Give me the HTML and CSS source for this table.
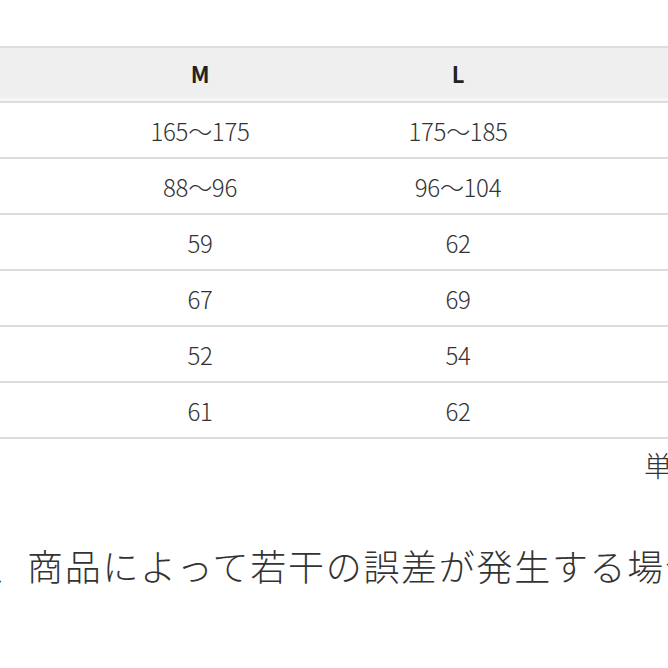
FILE: index.html
```html
<!DOCTYPE html>
<html lang="ja">
<head>
<meta charset="utf-8">
<title>サイズ表</title>
<link rel="stylesheet" href="styles.css">
</head>
<body>
<main class="sheet">
  <div class="size-table">
    <div class="row head">
      <div class="cell">サイズ</div>
      <div class="cell">M</div>
      <div class="cell">L</div>
      <div class="cell">XL</div>
    </div>
    <div class="row">
      <div class="cell">身長</div>
      <div class="cell">165〜175</div>
      <div class="cell">175〜185</div>
      <div class="cell">185〜195</div>
    </div>
    <div class="row">
      <div class="cell">胸囲</div>
      <div class="cell">88〜96</div>
      <div class="cell">96〜104</div>
      <div class="cell">104〜112</div>
    </div>
    <div class="row">
      <div class="cell">肩幅</div>
      <div class="cell">59</div>
      <div class="cell">62</div>
      <div class="cell">65</div>
    </div>
    <div class="row">
      <div class="cell">着丈</div>
      <div class="cell">67</div>
      <div class="cell">69</div>
      <div class="cell">71</div>
    </div>
    <div class="row">
      <div class="cell">身幅</div>
      <div class="cell">52</div>
      <div class="cell">54</div>
      <div class="cell">56</div>
    </div>
    <div class="row">
      <div class="cell">袖丈</div>
      <div class="cell">61</div>
      <div class="cell">62</div>
      <div class="cell">63</div>
    </div>
  </div>
  <p class="unit">単位：cm</p>
  <p class="note">※平置き採寸のため、商品によって若干の誤差が発生する場合がございます。</p>
</main>
</body>
</html>
```

FILE: styles.css
```css
html, body {
  margin: 0;
  padding: 0;
  background: #ffffff;
}

body {
  width: 668px;
  height: 668px;
  overflow: hidden;
  font-family: "Noto Sans CJK JP", "Noto Sans", sans-serif;
  color: #333333;
}

.sheet {
  padding-top: 46px;
  white-space: nowrap;
}

.size-table {
  margin-left: -187px;
  width: 1032px;
}

.row {
  display: grid;
  grid-template-columns: repeat(4, 258px);
  height: 56px;
  border-bottom: 2px solid #dddddd;
  box-sizing: border-box;
}

.row.head {
  height: 57px;
  border-top: 2px solid #dddddd;
  background: #efefef;
  box-shadow: inset 0 -3px 0 #f6f6f6;
}

.cell {
  display: flex;
  align-items: center;
  justify-content: center;
  font-size: 24px;
  font-weight: 300;
  letter-spacing: -0.3px;
}

.head .cell {
  font-size: 22px;
  font-weight: 600;
  color: #222222;
  padding-bottom: 3px;
}

.unit {
  margin: 8px 0 0 0;
  padding-left: 644px;
  font-size: 28px;
  line-height: 36px;
  font-weight: 300;
  color: #333333;
}

.note {
  margin: 60px 0 0 -350px;
  font-size: 36px;
  line-height: 44px;
  letter-spacing: 1.7px;
  font-weight: 300;
  color: #333333;
}
```
